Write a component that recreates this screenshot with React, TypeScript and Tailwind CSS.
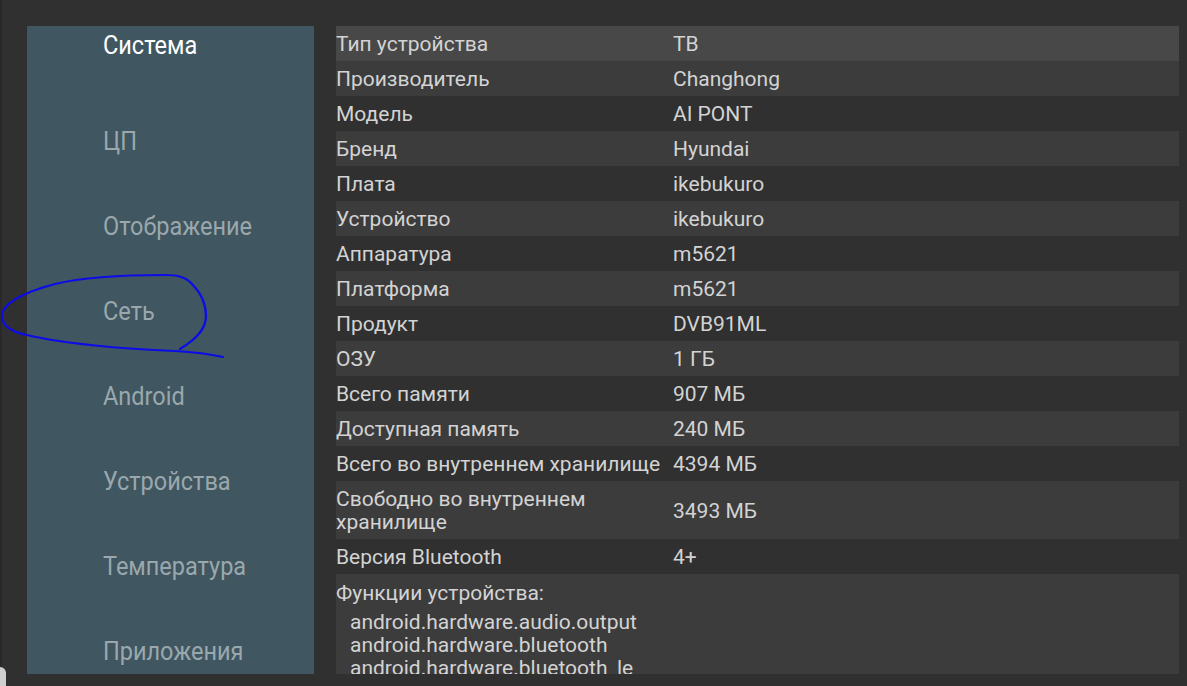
import React from "react";

const menu = [
  "ЦП",
  "Отображение",
  "Сеть",
  "Android",
  "Устройства",
  "Температура",
  "Приложения",
];

type Row = { label: string; value: string };

const rows: Row[] = [
  { label: "Тип устройства", value: "ТВ" },
  { label: "Производитель", value: "Changhong" },
  { label: "Модель", value: "AI PONT" },
  { label: "Бренд", value: "Hyundai" },
  { label: "Плата", value: "ikebukuro" },
  { label: "Устройство", value: "ikebukuro" },
  { label: "Аппаратура", value: "m5621" },
  { label: "Платформа", value: "m5621" },
  { label: "Продукт", value: "DVB91ML" },
  { label: "ОЗУ", value: "1 ГБ" },
  { label: "Всего памяти", value: "907 МБ" },
  { label: "Доступная память", value: "240 МБ" },
  { label: "Всего во внутреннем хранилище", value: "4394 МБ" },
  { label: "Свободно во внутреннем хранилище", value: "3493 МБ" },
  { label: "Версия Bluetooth", value: "4+" },
];

const features = [
  "android.hardware.audio.output",
  "android.hardware.bluetooth",
  "android.hardware.bluetooth_le",
];

export default function App() {
  return (
    <div className="relative w-[1187px] h-[686px] overflow-hidden bg-[#303030] font-['Roboto',sans-serif]">
      {/* thin darker strip on the left edge */}
      <div className="absolute left-0 top-0 h-full w-[2px] bg-[#292929]" />

      <div className="flex pt-[26px] pl-[27px] gap-[22px]">
        {/* Sidebar */}
        <nav className="w-[287px] h-[648px] overflow-hidden bg-[#405660] pl-[76px] text-[25px] leading-[30px]">
          <div className="h-[40px] flex items-center text-white">
            <span className="origin-left scale-x-[0.94] whitespace-nowrap">Система</span>
          </div>
          <div className="pt-[33px]">
            {menu.map((m) => (
              <div key={m} className="h-[85px] flex items-center text-[#9aa8ad]">
                <span className="origin-left scale-x-[0.94] whitespace-nowrap">{m}</span>
              </div>
            ))}
          </div>
        </nav>

        {/* Info table */}
        <div className="w-[843px] h-[648px] overflow-hidden text-[21px] leading-[23px] text-[#d3d3d3]">
          {rows.map((r, i) => (
            <div
              key={r.label}
              className={`flex items-center pt-[7px] pb-[5px] ${
                i === 0 ? "bg-[#484848]" : i % 2 === 1 ? "bg-[#3c3c3c]" : ""
              }`}
            >
              <div className="w-[337px] shrink-0 pr-[8px]">{r.label}</div>
              <div>{r.value}</div>
            </div>
          ))}
          <div className="bg-[#3c3c3c] pt-[8px] pb-[10px]">
            <div>Функции устройства:</div>
            <div className="mt-[6px] pl-[14px]">
              {features.map((f) => (
                <div key={f}>{f}</div>
              ))}
            </div>
          </div>
        </div>
      </div>

      {/* hand-drawn blue circle around "Сеть" */}
      <svg
        className="absolute left-0 top-0 pointer-events-none"
        width="1187"
        height="686"
        viewBox="0 0 1187 686"
        fill="none"
      >
        <path
          d="M180 349 C195 340 206 330 206 316 C206 303 200 292 192 284 C185 276 175 275 165 275 C120 275 80 278 55 284 C25 292 2 303 2 316 C2 326 12 332 27 335 C60 343 120 349 175 351 C195 352 210 354 223 357"
          stroke="#0c0ce8"
          strokeWidth="2.2"
          strokeLinecap="round"
          strokeLinejoin="round"
        />
      </svg>

      {/* cursor fragment bottom-left */}
      <div className="absolute left-0 top-[667px] w-[6px] h-[19px] rounded-tr-[6px] bg-[#cfcfcf]" />
    </div>
  );
}
